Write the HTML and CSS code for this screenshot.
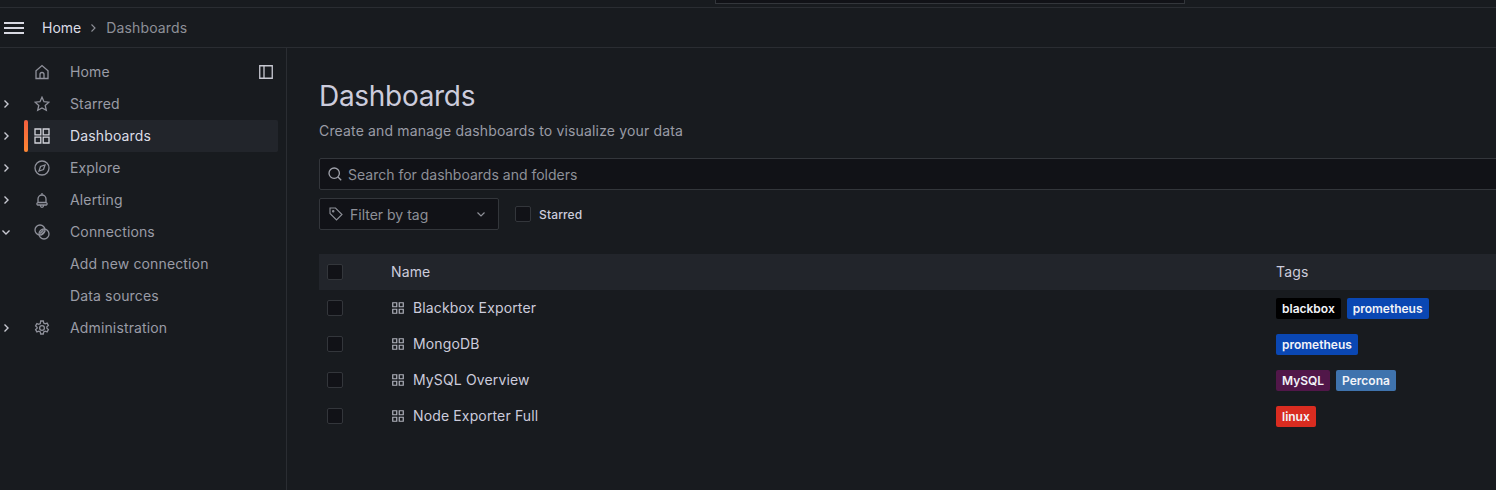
FILE: index.html
```html
<!DOCTYPE html>
<html lang="en">
<head>
    <meta charset="UTF-8">
    <meta name="viewport" content="width=device-width, initial-scale=1.0">
    <title>Dashboards</title>
    <link rel="stylesheet" href="styles.css">
</head>
<body>
    <div class="topstrip">
        <div class="topsearch"></div>
    </div>

    <header class="crumbbar">
        <svg class="burger" viewBox="0 0 20 12"><path d="M0 1h20M0 6h20M0 11h20"/></svg>
        <a class="crumb-home">Home</a>
        <svg class="crumb-sep" viewBox="0 0 8 10"><path d="M2.5 1.5 6 5 2.5 8.5"/></svg>
        <span class="crumb-current">Dashboards</span>
    </header>

    <div class="layout">
        <nav class="sidebar">
            <div class="nav-row">
                <span class="nav-chevron"></span>
                <svg class="nav-icon" viewBox="0 0 16 16"><path d="M2 14.5V6.8L8 1.5l6 5.3v7.7zM6 14.5V10.5a2 2 0 0 1 4 0v4"/></svg>
                <span class="nav-label">Home</span>
                <svg class="dock-icon" viewBox="0 0 14 14"><path d="M.75.75h12.5v12.5H.75zM5 .75v12.5"/></svg>
            </div>
            <div class="nav-row">
                <svg class="nav-chevron" viewBox="0 0 8 10"><path d="M2.5 1.5 6 5 2.5 8.5"/></svg>
                <svg class="nav-icon" viewBox="0 0 16 16"><path d="M8 1.2l2 4.5 4.9.5-3.7 3.3 1.1 4.8L8 11.9l-4.3 2.4 1.1-4.8L1.1 6.2 6 5.7z"/></svg>
                <span class="nav-label">Starred</span>
            </div>
            <div class="nav-row active">
                <svg class="nav-chevron" viewBox="0 0 8 10"><path d="M2.5 1.5 6 5 2.5 8.5"/></svg>
                <svg class="nav-icon" viewBox="0 0 16 16"><path d="M1 1h5.800v5.800H1zM9.200 1H15v5.800H9.200zM1 9.200h5.800V15H1zM9.200 9.200H15V15H9.200z"/></svg>
                <span class="nav-label">Dashboards</span>
            </div>
            <div class="nav-row">
                <svg class="nav-chevron" viewBox="0 0 8 10"><path d="M2.5 1.5 6 5 2.5 8.5"/></svg>
                <svg class="nav-icon" viewBox="0 0 16 16"><circle cx="8" cy="8" r="7"/><path d="M11 5 9.500 9.500 5 11l1.500-4.500z"/></svg>
                <span class="nav-label">Explore</span>
            </div>
            <div class="nav-row">
                <svg class="nav-chevron" viewBox="0 0 8 10"><path d="M2.5 1.5 6 5 2.5 8.5"/></svg>
                <svg class="nav-icon" viewBox="0 0 16 16"><path d="M4 10.5V7a4 4 0 0 1 8 0v3.500M3.800 10.500h8.400a1.300 1.300 0 0 1 0 2.500H3.800a1.300 1.300 0 0 1 0-2.500zM8 1v2M6.500 13v.8a1.500 1.500 0 0 0 3 0V13"/></svg>
                <span class="nav-label">Alerting</span>
            </div>
            <div class="nav-row">
                <svg class="nav-chevron" viewBox="0 0 10 8"><path d="M1.500 2.500 5 6l3.500-3.500"/></svg>
                <svg class="nav-icon" viewBox="0 0 16 16"><circle cx="6" cy="6" r="5"/><circle cx="10" cy="10" r="5"/><path d="M6 9.500 9.500 6M7 11l4-4"/></svg>
                <span class="nav-label">Connections</span>
            </div>
            <div class="nav-row">
                <span class="nav-chevron"></span>
                <span class="nav-icon"></span>
                <span class="nav-label">Add new connection</span>
            </div>
            <div class="nav-row">
                <span class="nav-chevron"></span>
                <span class="nav-icon"></span>
                <span class="nav-label">Data sources</span>
            </div>
            <div class="nav-row">
                <svg class="nav-chevron" viewBox="0 0 8 10"><path d="M2.5 1.5 6 5 2.5 8.5"/></svg>
                <svg class="nav-icon" viewBox="0 0 16 16"><circle cx="8" cy="8" r="2.400"/><path d="M6.700 1h2.600l.4 2 1.500.8 1.900-.7 1.300 2.300-1.500 1.300v1.600l1.500 1.300-1.300 2.300-1.900-.7-1.500.8-.4 2H6.700l-.4-2-1.500-.8-1.900.7-1.300-2.300 1.500-1.300V7.200L1.600 5.900l1.300-2.300 1.900.7 1.500-.8z"/></svg>
                <span class="nav-label">Administration</span>
            </div>
        </nav>

        <main class="content">
            <h1>Dashboards</h1>
            <p class="subtitle">Create and manage dashboards to visualize your data</p>

            <div class="search">
                <svg class="search-icon" viewBox="0 0 14 14"><circle cx="6.200" cy="6.200" r="5.200"/><path d="m10 10 3.200 3.200"/></svg>
                <span>Search for dashboards and folders</span>
            </div>

            <div class="filters">
                <div class="tag-filter">
                    <svg class="tag-icon" viewBox="0 0 14 14"><path d="M1 1h5.500L13 7.500 7.500 13 1 6.500z"/><circle cx="4.200" cy="4.200" r=".7"/></svg>
                    <span>Filter by tag</span>
                    <svg class="tag-caret" viewBox="0 0 10 8"><path d="M1.500 2.500 5 6l3.500-3.500"/></svg>
                </div>
                <span class="checkbox"></span>
                <span class="starred-label">Starred</span>
            </div>

            <div class="table">
                <div class="table-row table-head">
                    <span class="checkbox"></span>
                    <span class="cell-name"><span class="row-title">Name</span></span>
                    <span class="cell-tags"><span class="row-title">Tags</span></span>
                </div>
                <div class="table-row">
                    <span class="checkbox"></span>
                    <span class="cell-name">
                        <svg class="row-icon" viewBox="0 0 12 12"><path d="M.75.75h4v4h-4zM7.250.75h4v4h-4zM.75 7.250h4v4h-4zM7.250 7.250h4v4h-4z"/></svg>
                        <span class="row-title">Blackbox Exporter</span>
                    </span>
                    <span class="cell-tags">
                        <span class="tag tag-black">blackbox</span>
                        <span class="tag tag-blue">prometheus</span>
                    </span>
                </div>
                <div class="table-row">
                    <span class="checkbox"></span>
                    <span class="cell-name">
                        <svg class="row-icon" viewBox="0 0 12 12"><path d="M.75.75h4v4h-4zM7.250.75h4v4h-4zM.75 7.250h4v4h-4zM7.250 7.250h4v4h-4z"/></svg>
                        <span class="row-title">MongoDB</span>
                    </span>
                    <span class="cell-tags">
                        <span class="tag tag-blue">prometheus</span>
                    </span>
                </div>
                <div class="table-row">
                    <span class="checkbox"></span>
                    <span class="cell-name">
                        <svg class="row-icon" viewBox="0 0 12 12"><path d="M.75.75h4v4h-4zM7.250.75h4v4h-4zM.75 7.250h4v4h-4zM7.250 7.250h4v4h-4z"/></svg>
                        <span class="row-title">MySQL Overview</span>
                    </span>
                    <span class="cell-tags">
                        <span class="tag tag-purple">MySQL</span>
                        <span class="tag tag-steel">Percona</span>
                    </span>
                </div>
                <div class="table-row">
                    <span class="checkbox"></span>
                    <span class="cell-name">
                        <svg class="row-icon" viewBox="0 0 12 12"><path d="M.75.75h4v4h-4zM7.250.75h4v4h-4zM.75 7.250h4v4h-4zM7.250 7.250h4v4h-4z"/></svg>
                        <span class="row-title">Node Exporter Full</span>
                    </span>
                    <span class="cell-tags">
                        <span class="tag tag-red">linux</span>
                    </span>
                </div>
            </div>
        </main>
    </div>
</body>
</html>
```

FILE: styles.css
```css
* {
    box-sizing: border-box;
}

html,
body {
    height: 100%;
}

body {
    margin: 0;
    overflow: hidden;
    display: flex;
    flex-direction: column;
    font-family: Inter, "Noto Sans", sans-serif;
    font-size: 14px;
    letter-spacing: 0.14px;
    color: #ccccdc;
    background-color: #181b1f;
}

svg {
    display: block;
    flex: none;
    fill: none;
    stroke: currentColor;
    stroke-width: 1.3;
}

.topstrip {
    height: 8px;
    flex: none;
    padding-left: 715px;
    background-color: #181b1f;
    border-bottom: 1px solid #2a2d32;
}

.topsearch {
    width: 470px;
    height: 4px;
    background-color: #111217;
    border: 1px solid #33363b;
    border-top: none;
}

.crumbbar {
    height: 40px;
    flex: none;
    display: flex;
    align-items: center;
    padding-left: 4px;
    border-bottom: 1px solid #2a2d32;
}

.burger {
    width: 20px;
    height: 12px;
    stroke: #d8d9e2;
    stroke-width: 1.8;
    margin-right: 18px;
}

.crumb-home {
    color: #dcdde6;
    letter-spacing: 0;
}

.crumb-sep {
    width: 8px;
    height: 10px;
    margin: 0 9px 0 8px;
    color: #8e9098;
    stroke-width: 1.100;
}

.crumb-current {
    color: #8e9098;
}

.layout {
    flex: 1;
    display: flex;
    min-height: 0;
}

.sidebar {
    width: 287px;
    flex: none;
    padding: 8px 8px 0 0;
    border-right: 1px solid #2a2d32;
}

.nav-row {
    position: relative;
    height: 32px;
    display: flex;
    align-items: center;
    border-radius: 2px;
    color: #9a9ca6;
}

.nav-row .nav-chevron {
    width: 10px;
    height: 10px;
    margin: 0 23px 0 1px;
    flex: none;
    color: #c8c9d2;
    stroke-width: 1.400;
}

.nav-icon {
    width: 16px;
    height: 16px;
    flex: none;
    margin-right: 20px;
    color: #8f919b;
}

.nav-label {
    padding-bottom: 2px;
}

.nav-row.active {
    color: #dcdde6;
    background: linear-gradient(#22252b, #22252b) no-repeat 24px 0 / 254px 100%;
}

.nav-row.active::before {
    content: "";
    position: absolute;
    left: 24px;
    top: 0;
    bottom: 0;
    width: 4px;
    border-radius: 2px;
    background-image: linear-gradient(#f55f3e, #ff8833);
}

.nav-row.active .nav-icon {
    color: #d3d4dc;
}

.dock-icon {
    position: absolute;
    left: 259px;
    top: 9px;
    width: 14px;
    height: 14px;
    color: #c8c9d2;
}

.content {
    flex: 1;
    min-width: 0;
    overflow: hidden;
    padding: 30px 0 0 32px;
}

h1 {
    margin: 0;
    font-size: 28px;
    font-weight: 400;
    line-height: 36px;
    letter-spacing: -0.3px;
    color: #ccccdc;
}

.subtitle {
    margin: 8px 0 0;
    line-height: 18px;
    letter-spacing: 0.16px;
    color: #9a9ca6;
}

.search {
    height: 32px;
    margin: 18px -20px 0 0;
    display: flex;
    align-items: center;
    padding-left: 8px;
    letter-spacing: 0;
    color: #8e9098;
    background-color: #111217;
    border: 1px solid #33363b;
    border-radius: 2px;
}

.search-icon {
    width: 14px;
    height: 14px;
    margin-right: 6px;
    color: #a0a2ab;
}

.filters {
    margin-top: 8px;
    display: flex;
    align-items: center;
}

.tag-filter {
    width: 180px;
    height: 32px;
    display: flex;
    align-items: center;
    padding: 0 12px 0 9px;
    letter-spacing: 0;
    color: #8e9098;
    background-color: #111217;
    border: 1px solid #33363b;
    border-radius: 2px;
}

.tag-icon {
    width: 14px;
    height: 14px;
    margin-right: 7px;
    stroke-width: 1.100;
}

.tag-caret {
    width: 10px;
    height: 8px;
    margin-left: auto;
    stroke-width: 1.200;
}

.checkbox {
    width: 16px;
    height: 16px;
    flex: none;
    background-color: #111217;
    border: 1px solid #33363b;
    border-radius: 2px;
}

.filters .checkbox {
    margin-left: 16px;
}

.starred-label {
    margin-left: 8px;
    font-size: 12px;
    font-weight: 500;
    color: #ccccdc;
}

.table {
    margin-top: 24px;
}

.table-row {
    height: 36px;
    display: flex;
    align-items: center;
    padding-left: 8px;
}

.table-head {
    background-color: #22252b;
}

.cell-name {
    width: 885px;
    margin-left: 48px;
    flex: none;
    display: flex;
    align-items: center;
    gap: 9px;
}

.row-title {
    padding-bottom: 2px;
}

.row-icon {
    width: 12px;
    height: 12px;
    margin-left: 1px;
    color: #b0b2bc;
    stroke-width: 1.200;
}

.cell-tags {
    display: flex;
    gap: 6px;
}

.tag {
    height: 21px;
    padding: 0 6px;
    display: flex;
    align-items: center;
    font-size: 12px;
    font-weight: 600;
    letter-spacing: 0;
    color: #f2f3f8;
    border-radius: 2px;
}

.tag-black {
    background-color: #000000;
}

.tag-blue {
    background-color: #0a47b3;
}

.tag-purple {
    background-color: #511749;
}

.tag-steel {
    background-color: #3f73ad;
}

.tag-red {
    background-color: #d92c20;
}
```
